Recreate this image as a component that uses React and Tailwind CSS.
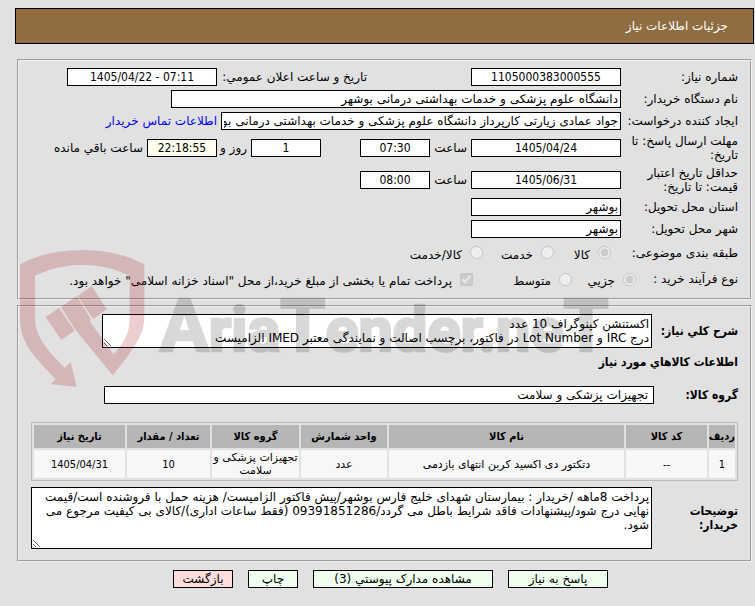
const SANS = "font-['DejaVu_Sans',sans-serif]";
const COND = "font-['DejaVu_Sans_Condensed','DejaVu_Sans',sans-serif]";
const BOX = "h-[18px] shrink-0 border border-black leading-[14px]";

function Field({ id, label, children, className = "h-[22px]", labelWidth = "w-[117px]" }) {
  return (
    <div className={`flex items-center ${className}`}>
      <label htmlFor={id} className={`shrink-0 ${labelWidth}`}>{label}</label>
      {children}
    </div>
  );
}

function NumberBox({ id, value, className = "w-[150px] bg-white", label }) {
  return (
    <input
      id={id}
      aria-label={label}
      dir="ltr"
      readOnly
      defaultValue={value}
      className={`${BOX} text-center ${COND} ${className}`}
    />
  );
}

function TextBox({ id, value, className }) {
  return <input id={id} readOnly defaultValue={value} className={`${BOX} bg-white ${className}`} />;
}

function Choice({ type = "radio", name, text, checked = false, className = "" }) {
  return (
    <label className={`flex shrink-0 items-center gap-2 whitespace-nowrap ${className}`}>
      <input type={type} name={name} defaultChecked={checked} disabled className="h-[13px] w-[13px] shrink-0" />
      <span className="pt-1">{text}</span>
    </label>
  );
}

function Watermark() {
  return (
    <svg
      aria-hidden="true"
      direction="ltr"
      viewBox="0 0 1830 450"
      className="pointer-events-none absolute top-[240px] left-[10px] h-[150px] w-[610px]"
    >
      <g fill="#aa0f19" opacity="0.2">
        <path d="M30 73Q110 30 216 30Q322 30 403 73V235C400 280 385 312 308 406L195 268L153 201L200 168L242 236L240 245L311 343C340 308 359 285 359 235V107Q290 74 216 74Q145 74 75 107V235C77 295 112 328 164 384L182 366L200 440L122 433L137 418C65 342 32 310 30 235Z" />
        <path d="M107 231L147 203L194 272L154 300Z" />
        <path d="M203 168L245 138L290 207L250 238Z" />
      </g>
      <g opacity="0.15" className="font-['Roboto',sans-serif] font-bold" fill="#000" stroke="#000" strokeWidth="8">
        <text x="450" y="333" fontSize="184">
          <tspan fontSize="218">A</tspan>
          <tspan>ria</tspan>
          <tspan fontSize="218">T</tspan>
          <tspan>ender.ne</tspan>
          <tspan fontSize="218">T</tspan>
        </text>
      </g>
    </svg>
  );
}

const COLUMNS = [
  { title: "ردیف", width: "w-[26px]", value: "1", font: COND },
  { title: "کد کالا", width: "w-[81px]", value: "--", font: COND },
  { title: "نام کالا", width: "", value: "دتکتور دی اکسید کربن انتهای بازدمی", font: SANS },
  { title: "واحد شمارش", width: "w-[86px]", value: "عدد", font: SANS },
  { title: "گروه کالا", width: "w-[87px]", value: "تجهیزات پزشکی و سلامت", font: SANS },
  { title: "تعداد / مقدار", width: "w-[83px]", value: "10", font: COND },
  { title: "تاریخ نیاز", width: "w-[91px]", value: "1405/04/31", font: COND },
];

const GROUP = "[border:2px_groove_#f0f0f0] mx-0.5 px-3";

export default function App() {
  return (
    <main dir="rtl" className={`relative min-h-screen bg-[#e1e1e1] pt-2 pr-px pb-[18px] pl-[15px] text-[12px] leading-[14px] text-black ${SANS}`}>
      <header className="flex h-9 items-center border border-black bg-[#8f6d40] px-[25px] text-white">
        <h1>جزئیات اطلاعات نیاز</h1>
      </header>

      <fieldset className={`mt-[15px] pt-[5px] pb-[5px] ${GROUP}`}>
        <Field id="number" label="شماره نیاز:">
          <NumberBox id="number" value="1105000383000555" />
          <label htmlFor="announced" className="mr-[104px] w-[150px] shrink-0 whitespace-nowrap">تاریخ و ساعت اعلان عمومي:</label>
          <NumberBox id="announced" value="1405/04/22 - 07:11" />
        </Field>
        <Field id="buyer" label="نام دستگاه خریدار:">
          <TextBox id="buyer" value="دانشگاه علوم پزشکی و خدمات بهداشتی درمانی بوشهر" className="w-[450px] px-0.5" />
        </Field>
        <Field id="creator" label="ایجاد کننده درخواست:">
          <TextBox id="creator" value="جواد عمادی زیارتی کارپرداز دانشگاه علوم پزشکی و خدمات بهداشتی درمانی بوشهر" className="w-[400px] px-0.5" />
          <a href="#contact" className="mr-1 whitespace-nowrap text-[#0000ff]">اطلاعات تماس خریدار</a>
        </Field>
        <Field id="deadline" label="مهلت ارسال پاسخ: تا تاریخ:" className="h-8">
          <NumberBox id="deadline" value="1405/04/24" />
          <span className="w-[41px] shrink-0 px-1">ساعت</span>
          <NumberBox label="ساعت" value="07:30" className="w-[70px] bg-white" />
          <NumberBox label="روز" value="1" className="mr-[39px] w-[70px] bg-white" />
          <span className="w-[34px] shrink-0 px-1 whitespace-nowrap">روز و</span>
          <NumberBox label="ساعت باقي مانده" value="22:18:55" className="w-[70px] bg-[#ffffee]" />
          <span className="px-1 whitespace-nowrap">ساعت باقي مانده</span>
        </Field>
        <Field id="validity" label={<>حداقل تاریخ اعتبار<br />قیمت: تا تاریخ:</>} className="h-8">
          <NumberBox id="validity" value="1405/06/31" />
          <span className="w-[41px] shrink-0 px-1">ساعت</span>
          <NumberBox label="ساعت" value="08:00" className="w-[70px] bg-white" />
        </Field>
        <Field id="province" label="استان محل تحویل:">
          <TextBox id="province" value="بوشهر" className="w-[150px] px-0.5" />
        </Field>
        <Field id="city" label="شهر محل تحویل:">
          <TextBox id="city" value="بوشهر" className="w-[150px] px-0.5" />
        </Field>
        <div role="radiogroup" aria-label="طبقه بندی موضوعی" className="flex h-[25px] items-center">
          <span className="w-[127px] shrink-0 whitespace-nowrap">طبقه بندی موضوعی:</span>
          <Choice name="subject" text="کالا" checked className="w-[57px]" />
          <Choice name="subject" text="خدمت" className="w-[71px]" />
          <Choice name="subject" text="کالا/خدمت" />
        </div>
        <div role="radiogroup" aria-label="نوع فرآیند خرید" className="flex h-7 items-center">
          <span className="w-[102px] shrink-0 whitespace-nowrap">نوع فرآیند خرید :</span>
          <Choice name="process" text="جزیي" checked className="w-[64px]" />
          <Choice name="process" text="متوسط" className="w-[99px]" />
          <Choice type="checkbox" name="treasury" checked text={'پرداخت تمام یا بخشی از مبلغ خرید،از محل "اسناد خزانه اسلامی" خواهد بود.'} />
        </div>
      </fieldset>

      <fieldset className={`mt-[5px] pt-[7px] pb-[11px] ${GROUP}`}>
        <div className="flex items-center">
          <label htmlFor="summary" className={`w-[86px] shrink-0 font-bold whitespace-nowrap ${COND}`}>شرح کلي نیاز:</label>
          <textarea
            id="summary"
            readOnly
            className={`block h-[34px] w-[550px] resize overflow-hidden border border-black bg-white p-0.5 ${SANS}`}
            defaultValue={"اکستنشن کپنوگراف 10 عدد\nدرج IRC و Lot Number در فاکتور، برچسب اصالت و نمایندگی معتبر IMED الزامیست"}
          />
        </div>
        <h2 className={`flex h-7 items-center font-bold ${COND}`}>اطلاعات کالاهاي مورد نیاز</h2>
        <div className="mt-[10px] flex items-center">
          <label htmlFor="group" className={`w-[84px] shrink-0 font-bold whitespace-nowrap ${COND}`}>گروه کالا:</label>
          <TextBox id="group" value="تجهیزات پزشکی و سلامت" className="w-[550px] px-[5px]" />
        </div>
        <table className="mt-[18px] w-full table-fixed border-separate border-spacing-0.5 border border-[#bbbbbb] text-center text-[11px] leading-[13px]">
          <thead>
            <tr className="h-[23px] bg-[#b6b6b6]">
              {COLUMNS.map(({ title, width }) => (
                <th key={title} className={`p-0 whitespace-nowrap ${COND} ${width}`}>{title}</th>
              ))}
            </tr>
          </thead>
          <tbody>
            <tr className="h-7 bg-[#f7f7f7]">
              {COLUMNS.map(({ title, value, font }) => (
                <td key={title} className={`p-0 ${font}`}>{value}</td>
              ))}
            </tr>
          </tbody>
        </table>
        <div className="mt-1.5 flex items-center">
          <label htmlFor="notes" className={`w-[86px] shrink-0 font-bold ${COND}`}>توضیحات<br />خریدار:</label>
          <textarea
            id="notes"
            readOnly
            className={`block h-[62px] min-w-0 flex-1 resize border border-black bg-white p-0.5 ${SANS}`}
            defaultValue={"پرداخت 8ماهه /خریدار : بیمارستان شهدای خلیج فارس بوشهر/پیش فاکتور الزامیست/ هزینه حمل با فروشنده است/قیمت\nنهایی درج شود/پیشنهادات فاقد شرایط باطل می گردد/09391851286 (فقط ساعات اداری)/کالای بی کیفیت مرجوع می\nشود."}
          />
        </div>
      </fieldset>

      <div className="mt-2 flex justify-center gap-[15px] pl-3">
        <button type="button" className={`${BOX} w-[100px] bg-[#eeffee]`}>پاسخ به نیاز</button>
        <button type="button" className={`${BOX} w-[180px] bg-[#eeffee]`}>مشاهده مدارک پیوستي (3)</button>
        <button type="button" className={`${BOX} w-[50px] bg-[#eeffee]`}>چاپ</button>
        <button type="button" className={`${BOX} w-[60px] bg-[#ffdddd]`}>بازگشت</button>
      </div>

      <Watermark />
    </main>
  );
}
